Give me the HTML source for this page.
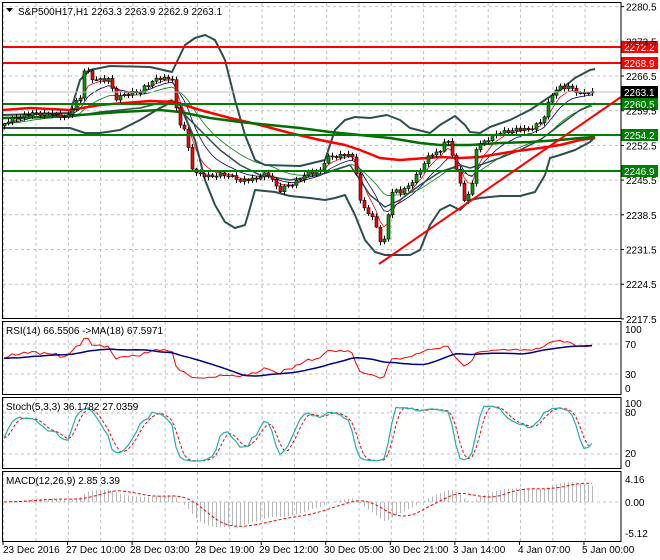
<!DOCTYPE html>
<html><head><meta charset="utf-8"><style>
html,body{margin:0;padding:0;background:#fff;}
svg{display:block;font-family:"Liberation Sans",sans-serif;font-size:10px;}
</style></head><body>
<svg id="s" width="660" height="560" xmlns="http://www.w3.org/2000/svg">
<rect width="660" height="560" fill="#fff"/>
<g id="grid"></g>
<g id="ind"></g>
<g id="cand"></g>
<g id="top"></g>
<g id="frames" fill="none" stroke="#000" stroke-width="1">
<rect x="2.5" y="2.5" width="618.5" height="316"/>
<rect x="2.5" y="321.5" width="618.5" height="73"/>
<rect x="2.5" y="397.5" width="618.5" height="71"/>
<rect x="2.5" y="471.5" width="618.5" height="70"/>
</g>
<g id="txt" fill="#000">
<path d="M6 8 L13 8 L9.5 12 Z" fill="#000"/>
<text x="18" y="15">S&amp;P500H17,H1  2263.3 2263.9 2262.9 2263.1</text>
<text x="6" y="334">RSI(14) 66.5506  -&gt;MA(18) 67.5971</text>
<text x="6" y="410">Stoch(5,3,3) 36.1782 27.0359</text>
<text x="6" y="484">MACD(12,26,9) 2.85 3.39</text>
<text x="625" y="333">100</text><text x="625" y="348">70</text><text x="625" y="378">30</text><text x="625" y="392">0</text>
<text x="625" y="407">100</text><text x="625" y="416">80</text><text x="625" y="457">20</text><text x="625" y="467">0</text>
<text x="625" y="483">4.16</text><text x="625" y="506">0.00</text><text x="625" y="537">-5.12</text>
<text x="3" y="553">23 Dec 2016</text><text x="66" y="553">27 Dec 10:00</text><text x="130" y="553">28 Dec 03:00</text>
<text x="195" y="553">28 Dec 19:00</text><text x="259" y="553">29 Dec 12:00</text><text x="324" y="553">30 Dec 05:00</text>
<text x="389" y="553">30 Dec 21:00</text><text x="453" y="553">3 Jan 14:00</text><text x="518" y="553">4 Jan 07:00</text>
<text x="582" y="553">5 Jan 00:00</text>
</g>
</svg>
<script>
var NS="http://www.w3.org/2000/svg";
function el(p,t,a){var e=document.createElementNS(NS,t);for(var k in a)e.setAttribute(k,a[k]);document.getElementById(p).appendChild(e);return e;}
function pl(pts){return pts.map(function(p){return p[0].toFixed(1)+","+p[1].toFixed(1)}).join(" ");}
for(var k=0;k<19;k++){var x=3.7+32.3*k;if(x>620)break;
 [[3,318],[322,394],[398,468],[472,541]].forEach(function(r){el("grid","line",{x1:x,x2:x,y1:r[0],y2:r[1],stroke:"#c0c0c0","stroke-dasharray":"3,3"});});}
var plab=["2280.5","2273.5","2266.5","2259.5","2252.5","2245.5","2238.5","2231.5","2224.5","2217.5"];
for(var k=0;k<10;k++){var y=6.6+34.7*k;if(k<9)el("grid","line",{x1:3,x2:620,y1:y,y2:y,stroke:"#c0c0c0","stroke-dasharray":"3,3"});
 el("grid","line",{x1:621,x2:624,y1:y,y2:y,stroke:"#000"});var t=el("txt","text",{x:626,y:y+4});t.textContent=plab[k];}
[344,374,413,454,502].forEach(function(y){el("grid","line",{x1:3,x2:620,y1:y,y2:y,stroke:"#c0c0c0","stroke-dasharray":"3,3"});});
for(var k=0;k<10;k++){var x=3+64.55*k;el("grid","line",{x1:x,x2:x,y1:541,y2:545,stroke:"#000"});}
var kp=[[0,126],[15,118],[20,116],[40,113],[55,115],[70,116],[73,105],[80,98],[83,68],[87,70],[92,80],[100,80],[108,78],[112,90],[115,100],[120,97],[125,93],[140,93],[145,85],[155,80],[165,78],[172,78],[174,75],[176,110],[180,125],[185,130],[190,160],[193,170],[197,175],[205,176],[215,175],[235,176],[240,183],[245,180],[255,178],[265,175],[270,175],[275,185],[280,190],[290,185],[300,178],[310,173],[320,170],[325,160],[330,157],[340,155],[350,155],[355,165],[360,200],[365,210],[370,215],[375,225],[378,230],[382,250],[385,235],[390,200],[393,190],[398,192],[405,188],[410,185],[415,178],[420,170],[425,160],[430,155],[440,152],[443,140],[447,138],[450,150],[455,165],[460,185],[463,200],[467,195],[472,185],[475,150],[480,145],[485,140],[490,137],[500,133],[510,130],[520,130],[530,128],[535,126],[540,123],[545,115],[548,103],[552,93],[556,90],[560,88],[565,88],[570,86],[575,90],[580,95],[585,93],[590,92],[596,92]];
function interp(a,x){for(var i=1;i<a.length;i++){if(x<=a[i][0]){var t=(x-a[i-1][0])/(a[i][0]-a[i-1][0]);return a[i-1][1]+t*(a[i][1]-a[i-1][1]);}}return a[a.length-1][1];}
var bars=[];var prev=126;
for(var i=0;i<148;i++){var x=4+4*i;var c=interp(kp,x)+1.6*Math.sin(i*2.3)+1.0*Math.sin(i*5.1);
 var o=prev;var h=Math.min(o,c)-1-2.5*Math.abs(Math.sin(i*1.7));var l=Math.max(o,c)+1+2.5*Math.abs(Math.cos(i*1.3));
 bars.push({x:x,o:o,c:c,h:h,l:l});prev=c;}
bars.forEach(function(b){el("cand","line",{x1:b.x+0.5,x2:b.x+0.5,y1:b.h,y2:b.l,stroke:"#000"});
 var top=Math.min(b.o,b.c),hh=Math.max(1,Math.abs(b.o-b.c));
 el("cand","rect",{x:b.x-1,y:top,width:3,height:hh,fill:(b.c<b.o)?"#00a000":"#ff0000",stroke:"#000","stroke-width":0.6});});
function ema(arr,n){var k=2/(n+1),r=[],v=arr[0];arr.forEach(function(a,i){v=i?a*k+v*(1-k):a;r.push(v);});return r;}
var cy=bars.map(function(b){return b.c});
[[5,"#ff0000"],[10,"#000080"],[21,"#008000"]].forEach(function(m){var e=ema(cy,m[0]);el("ind","polyline",{points:pl(bars.map(function(b,i){return [b.x,e[i]]})),fill:"none",stroke:m[1],"stroke-width":0.8});});
var up=[[3,115],[70,113],[80,80],[90,70],[110,66],[150,67],[172,72],[185,45],[195,38],[205,35],[215,40],[225,60],[235,100],[245,135],[255,160],[265,165],[300,166],[325,160],[335,130],[345,120],[355,117],[370,118],[387,115],[400,120],[410,128],[430,133],[440,125],[455,116],[465,125],[470,132],[480,133],[490,127],[510,120],[530,110],[545,100],[560,90],[575,78],[590,70],[595,69]];
var lo=[[3,128],[70,128],[85,133],[100,133],[120,130],[140,120],[160,108],[172,102],[180,105],[195,140],[205,180],[215,205],[225,222],[235,228],[245,225],[250,208],[255,190],[275,192],[290,196],[310,198],[325,200],[335,198],[345,195],[355,215],[365,240],[375,252],[385,255],[410,255],[420,250],[430,225],[440,210],[450,205],[460,210],[470,200],[480,198],[500,196],[520,196],[535,192],[545,175],[550,158],[560,155],[575,150],[590,142],[595,137]];
var mid=[[3,118],[70,117],[100,112],[140,108],[172,100],[180,110],[200,130],[220,150],[240,165],[260,175],[290,180],[320,175],[350,165],[360,180],[370,195],[385,207],[400,200],[420,185],[440,172],[460,165],[470,168],[480,165],[500,158],[520,150],[540,140],[560,125],[580,110],[595,103]];
var rma=[[3,110],[30,108],[70,110],[100,105],[150,101],[175,102],[200,110],[230,118],[260,125],[290,133],[320,140],[345,145],[360,150],[380,158],[400,160],[440,157],[460,158],[480,157],[510,152],[540,148],[560,145],[580,140],[595,138]];
var gma=[[3,118],[50,117],[80,115],[120,112],[160,110],[180,112],[210,118],[240,122],[270,125],[300,128],[330,132],[360,135],[390,138],[420,143],[440,145],[470,145],[500,143],[530,142],[560,140],[580,138],[595,137]];
[[up,"#2f4f4f",2],[lo,"#2f4f4f",2],[mid,"#2f4f4f",1.5],[rma,"#ff0000",2.5],[gma,"#007000",2.5]].forEach(function(a){el("ind","polyline",{points:pl(a[0]),fill:"none",stroke:a[1],"stroke-width":a[2],"stroke-linejoin":"round"});});
[[47,"#ff0000","2272.2"],[63,"#ff0000","2268.9"],[104,"#008000","2260.5"],[135,"#008000","2254.2"],[171,"#008000","2246.9"]].forEach(function(a){
 el("top","line",{x1:3,x2:621,y1:a[0],y2:a[0],stroke:a[1],"stroke-width":2});
 el("top","rect",{x:621,y:a[0]-6,width:37,height:12,fill:a[1]});
 var t=el("top","text",{x:624,y:a[0]+4,fill:"#fff"});t.textContent=a[2];});
el("top","line",{x1:3,x2:621,y1:92,y2:92,stroke:"#c0c0c0"});
el("top","rect",{x:621,y:86,width:37,height:12,fill:"#000"});
var t=el("top","text",{x:624,y:96,fill:"#fff"});t.textContent="2263.1";
el("top","line",{x1:379,y1:264,x2:621,y2:97,stroke:"#ff0000","stroke-width":2});
// oscillators with warm-up padding
var PAD=40;
var P0=cy.map(function(y){return -y/4.96}),H0=bars.map(function(b){return -b.h/4.96}),L0=bars.map(function(b){return -b.l/4.96});
var P=[],H=[],L=[];
for(var j=0;j<PAD;j++){var v=P0[0]+0.5*Math.sin(j*2.3)+0.3*Math.sin(j*5.1)+0.004*(j-PAD);P.push(v);H.push(v+0.5);L.push(v-0.5);}
P=P.concat(P0);H=H.concat(H0);L=L.concat(L0);
var rsi=[],ag=0,al=0;for(var i=0;i<P.length;i++){if(i==0){rsi.push(50);continue;}var d=P[i]-P[i-1];var g=d>0?d:0,l=d<0?-d:0;
 if(i<=14){ag=(ag*(i-1)+g)/i;al=(al*(i-1)+l)/i;}else{ag=(ag*13+g)/14;al=(al*13+l)/14;}rsi.push(al==0?100:100-100/(1+ag/al));}
var rma18=rsi.map(function(v,i){var s=0,n=0;for(var j=Math.max(0,i-17);j<=i;j++){s+=rsi[j];n++;}return s/n;});
function ry(v){return 388-0.59*v}
function sl(a){return a.slice(PAD);}
rsi=sl(rsi);rma18=sl(rma18);
el("ind","polyline",{points:pl(bars.map(function(b,i){return [b.x,ry(rsi[i])]})),fill:"none",stroke:"#ff0000"});
el("ind","polyline",{points:pl(bars.map(function(b,i){return [b.x,ry(rma18[i])]})),fill:"none",stroke:"#000080","stroke-width":1.5});
var raw=P.map(function(c,i){var hh=-1e9,ll=1e9;for(var j=Math.max(0,i-4);j<=i;j++){hh=Math.max(hh,H[j]);ll=Math.min(ll,L[j]);}return [c-ll,hh-ll];});
var K=raw.map(function(r,i){var a=0,b=0;for(var j=Math.max(0,i-2);j<=i;j++){a+=raw[j][0];b+=raw[j][1];}return b?100*a/b:50;});
var D=K.map(function(v,i){var s=0,n=0;for(var j=Math.max(0,i-2);j<=i;j++){s+=K[j];n++;}return s/n;});
K=sl(K);D=sl(D);
function sy(v){return 463-0.59*v}
el("ind","polyline",{points:pl(bars.map(function(b,i){return [b.x,sy(D[i])]})),fill:"none",stroke:"#ff0000","stroke-dasharray":"3,2"});
el("ind","polyline",{points:pl(bars.map(function(b,i){return [b.x,sy(K[i])]})),fill:"none",stroke:"#20b2aa","stroke-width":1.2});
var e12=ema(P,12),e26=ema(P,26);var mac=P.map(function(p,i){return e12[i]-e26[i]});
var sig=mac.map(function(v,i){var s=0,n=0;for(var j=Math.max(0,i-8);j<=i;j++){s+=mac[j];n++;}return s/n;});
mac=sl(mac);sig=sl(sig);
function my(v){return Math.max(473,Math.min(540,502-5.53*v))}
bars.forEach(function(b,i){el("ind","line",{x1:b.x+0.5,x2:b.x+0.5,y1:502,y2:my(mac[i]),stroke:"#b8b8b8"});});
el("ind","polyline",{points:pl(bars.map(function(b,i){return [b.x,my(sig[i])]})),fill:"none",stroke:"#ff0000","stroke-dasharray":"3,2"});
</script>
</body></html>
